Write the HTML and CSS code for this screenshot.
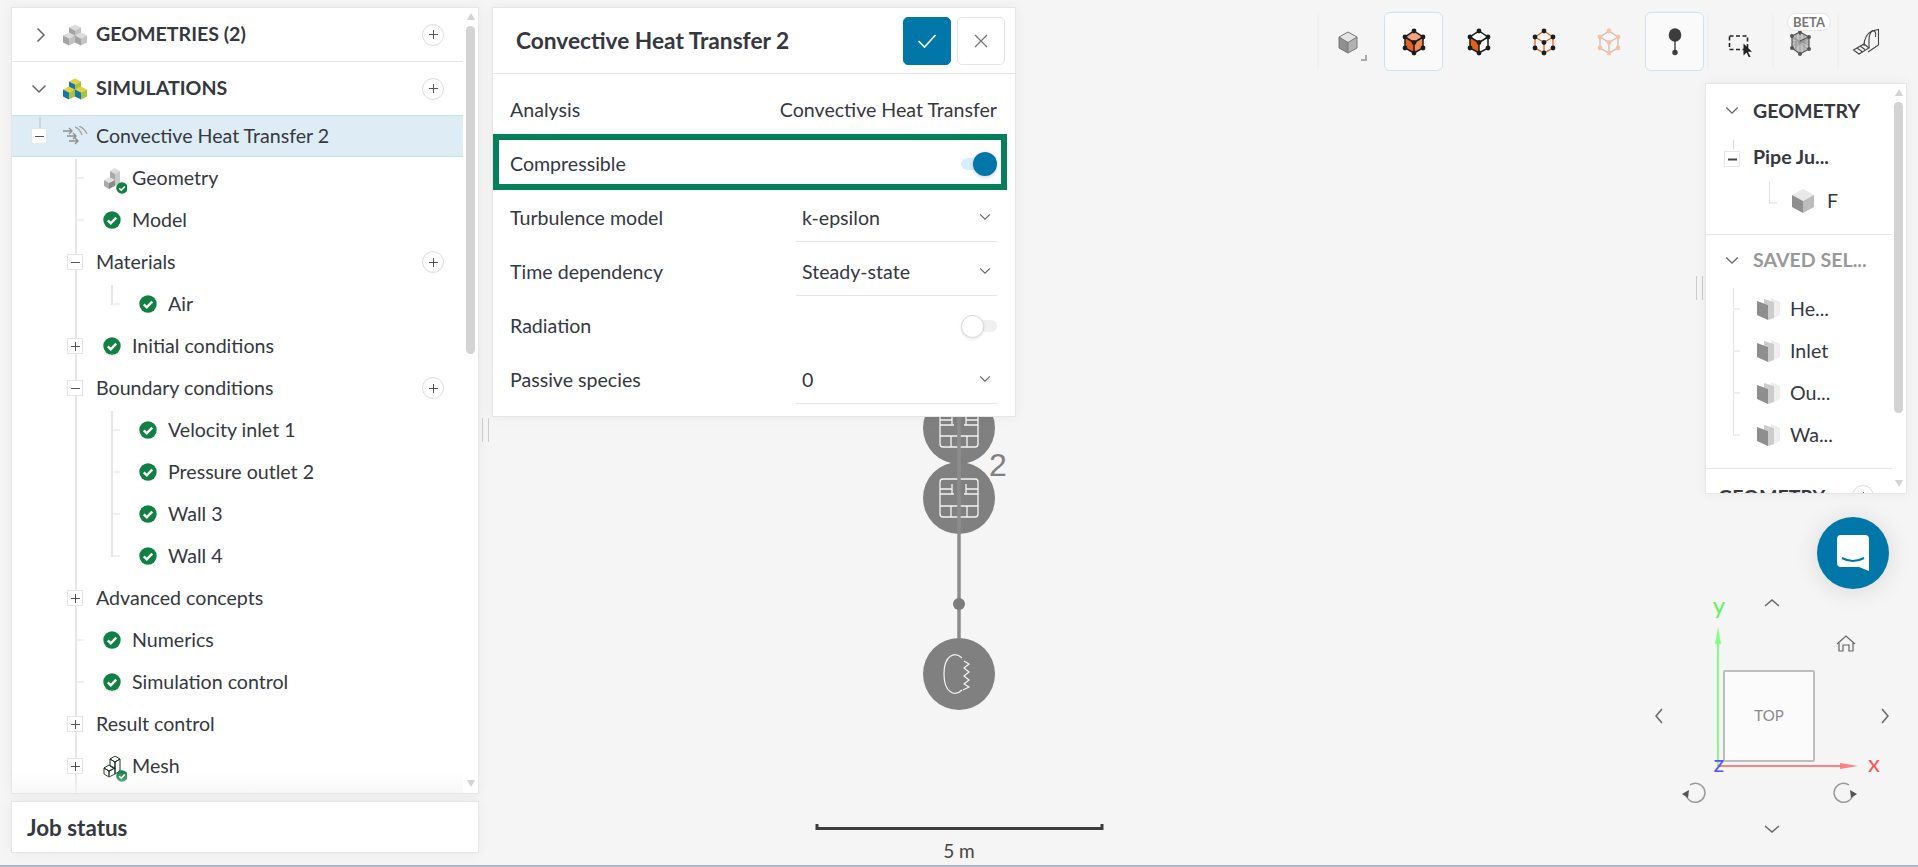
FILE: index.html
```html
<!DOCTYPE html>
<html lang="en">
<head>
<meta charset="utf-8">
<title>Convective Heat Transfer 2</title>
<link rel="stylesheet" href="styles.css">
</head>
<body>
<svg class="sprite" aria-hidden="true">
  <defs>
    <symbol id="ok" viewBox="0 0 18 18"><circle cx="9" cy="9" r="8.7" fill="#118043"/><path d="M4.8 9.3l3 3 5.4-5.6" fill="none" stroke="#fff" stroke-width="2.4"/></symbol>
    <symbol id="plus" viewBox="0 0 9 9"><path d="M4.5 0v9M0 4.5h9" stroke="#555" stroke-width="1" fill="none"/></symbol>
    <symbol id="minus" viewBox="0 0 9 9"><path d="M0 4.5h9" stroke="#555" stroke-width="1" fill="none"/></symbol>
    <symbol id="minus-b" viewBox="0 0 9 9"><path d="M0 4.5h9" stroke="#444" stroke-width="2" fill="none"/></symbol>
    <symbol id="chev-d" viewBox="0 0 16 10"><path d="M1.5 1.5L8 8l6.5-6.5" fill="none" stroke="#666" stroke-width="1.5"/></symbol>
    <symbol id="chev-r" viewBox="0 0 10 16"><path d="M1.5 1.5L8 8l-6.5 6.5" fill="none" stroke="#666" stroke-width="1.5"/></symbol>
    <g id="c3">
      <polygon class="ct" points="0,-6.5 6,-3.5 0,-.5 -6,-3.5"/>
      <polygon class="cl" points="-6,-3.5 0,-.5 0,6.5 -6,3.5"/>
      <polygon class="cr" points="6,-3.5 0,-.5 0,6.5 6,3.5"/>
    </g>
    <symbol id="face" viewBox="0 0 24 22">
      <polygon points="14,0 23,4 23,17 17,20 14,8" fill="#eeeeee"/>
      <polygon points="7,1 17,4 17,20 11,22 11,7 7,5.500" fill="#cccccc"/>
      <polygon points="0,3 11,7 11,22 0,17" fill="#8e8e8e"/>
    </symbol>
  </defs>
</svg>

<div class="app">
  <aside class="left">
    <section class="panel tree-panel">
      <div class="tree">
        <div class="head head-line">
          <svg class="hchev-r"><use href="#chev-r"/></svg>
          <svg class="cubes grey" viewBox="0 0 24 22"><use href="#c3" x="12" y="7"/><use href="#c3" x="6" y="15"/><use href="#c3" x="18" y="15"/></svg>
          <span class="head-text">GEOMETRIES (2)</span>
          <span class="add"><svg><use href="#plus"/></svg></span>
        </div>
        <div class="head head-sim">
          <svg class="hchev-d"><use href="#chev-d"/></svg>
          <svg class="cubes colour" viewBox="0 0 24 22"><use href="#c3" x="12" y="7"/><use href="#c3" x="6" y="15"/><use href="#c3" x="18" y="15"/></svg>
          <span class="head-text">SIMULATIONS</span>
          <span class="add"><svg><use href="#plus"/></svg></span>
        </div>
        <div class="sim-row">
          <span class="exp"><svg><use href="#minus"/></svg></span>
          <svg class="conv" viewBox="0 0 26 20" fill="none" stroke="#8f8f8f" stroke-width="1.4">
            <path d="M1 5h9M7 2l3 3-3 3M5 10h9M11 7l3 3-3 3M7 15h9M13 12l3 3-3 3"/>
            <path d="M13 1q5 2 7 8M17 0q5 2 8 8" stroke="#a8a8a8"/>
          </svg>
          <span class="label">Convective Heat Transfer 2</span>
        </div>
        <div class="children">
          <div class="row tick"><span class="slot"></span>
            <svg class="geo" viewBox="0 0 24 26"><polygon points="7,3 12,0 17,3 12,6" fill="#ddd"/><polygon points="7,3 12,6 12,13 7,10" fill="#aaa"/><polygon points="12,6 17,3 17,15 12,18" fill="#c9c9c9"/><polygon points="1,12 6,9 12,12 6,15" fill="#e4e4e4"/><polygon points="1,12 6,15 6,21 1,18" fill="#aaa"/><polygon points="6,15 12,12 12,18 6,21" fill="#8c8c8c"/><use href="#ok" x="13" y="14" width="12" height="12"/></svg>
            <span class="label geo-label">Geometry</span></div>
          <div class="row tick"><span class="slot"></span><svg class="ok"><use href="#ok"/></svg><span class="label">Model</span></div>
          <div class="row"><span class="exp"><svg><use href="#minus"/></svg></span><span class="label">Materials</span><span class="add"><svg><use href="#plus"/></svg></span></div>
          <div class="nested">
            <div class="row deep tick"><span class="slot"></span><svg class="ok"><use href="#ok"/></svg><span class="label">Air</span></div>
          </div>
          <div class="row"><span class="exp"><svg><use href="#plus"/></svg></span><svg class="ok"><use href="#ok"/></svg><span class="label">Initial conditions</span></div>
          <div class="row"><span class="exp"><svg><use href="#minus"/></svg></span><span class="label">Boundary conditions</span><span class="add"><svg><use href="#plus"/></svg></span></div>
          <div class="nested">
            <div class="row deep tick"><span class="slot"></span><svg class="ok"><use href="#ok"/></svg><span class="label">Velocity inlet 1</span></div>
            <div class="row deep tick"><span class="slot"></span><svg class="ok"><use href="#ok"/></svg><span class="label">Pressure outlet 2</span></div>
            <div class="row deep tick"><span class="slot"></span><svg class="ok"><use href="#ok"/></svg><span class="label">Wall 3</span></div>
            <div class="row deep tick"><span class="slot"></span><svg class="ok"><use href="#ok"/></svg><span class="label">Wall 4</span></div>
          </div>
          <div class="row"><span class="exp"><svg><use href="#plus"/></svg></span><span class="label">Advanced concepts</span></div>
          <div class="row tick"><span class="slot"></span><svg class="ok"><use href="#ok"/></svg><span class="label">Numerics</span></div>
          <div class="row tick"><span class="slot"></span><svg class="ok"><use href="#ok"/></svg><span class="label">Simulation control</span></div>
          <div class="row"><span class="exp"><svg><use href="#plus"/></svg></span><span class="label">Result control</span></div>
          <div class="row"><span class="exp"><svg><use href="#plus"/></svg></span>
            <svg class="geo" viewBox="0 0 24 26"><g fill="none" stroke="#1d3320" stroke-width="1"><polygon points="7,3 12,0 17,3 12,6"/><polygon points="7,3 12,6 12,13 7,10"/><polygon points="12,6 17,3 17,15 12,18"/><polygon points="1,12 6,9 12,12 6,15"/><polygon points="1,12 6,15 6,21 1,18"/><polygon points="6,15 12,12 12,18 6,21"/></g><use href="#ok" x="13" y="14" width="12" height="12"/></svg>
            <span class="label geo-label">Mesh</span></div>
        </div>
        <div class="fade"></div>
      </div>
      <div class="scrollbar">
        <span class="arrow-up"></span>
        <span class="thumb thumb-left"></span>
        <span class="grow"></span>
        <span class="arrow-down"></span>
      </div>
    </section>
    <section class="panel job">Job status</section>
  </aside>

  <main class="viewer">
    <svg class="scene" viewBox="0 0 1918 867" width="1918" height="867">
      <g class="diagram">
        <circle cx="959" cy="428" r="36" fill="#808080"/>
        <circle cx="959" cy="498" r="36" fill="#808080"/>
        <circle cx="959" cy="674" r="36" fill="#808080"/>
        <g fill="none" stroke="#f4f4f4" stroke-width="1.3">
          <rect x="940" y="410" width="38" height="37" rx="3"/>
          <path d="M940 420h12M952 415v10M940 425h14M966 420h12M966 415v10M964 425h14M940 436h38M951 436v11M967 436v11"/>
          <rect x="940" y="479" width="38" height="38" rx="3"/>
          <path d="M940 489h12M952 484v10M940 494h14M966 489h12M966 484v10M964 494h14M940 506h38M951 506v11M967 506v11"/>
          <path d="M962 658C955 651 944 655 944 674C944 693 955 697 962 690" stroke-width="1.2"/>
          <path d="M964 661l5 3-5 4 5 4-5 4 5 4-5 4 5 3-6 3" stroke-width="1.2"/>
        </g>
        <line x1="959" y1="417" x2="959" y2="638" stroke="#8c8c8c" stroke-width="3.500"/>
        <circle cx="959" cy="604" r="6" fill="#7d7d7d"/>
        <text x="989" y="476" class="count">2</text>
      </g>
      <g class="scale">
        <path d="M817 824v4.500h285v-4.500" fill="none" stroke="#3d3d3d" stroke-width="3"/>
        <text x="959" y="858" text-anchor="middle" class="scale-text">5 m</text>
      </g>
      <g class="gizmo">
        <rect x="1724" y="671" width="90" height="90" rx="1" fill="#fbfbfb" stroke="#bdbdbd" stroke-width="2"/>
        <text x="1769" y="721" text-anchor="middle" class="top-text">TOP</text>
        <line x1="1718" y1="640" x2="1718" y2="766" stroke="#80ff80" stroke-width="2"/>
        <polygon points="1718,627 1715,644 1721,644" fill="#80ff80"/>
        <line x1="1718" y1="766" x2="1845" y2="766" stroke="#ff8080" stroke-width="2"/>
        <polygon points="1858,766 1840,763 1840,769" fill="#ff8080"/>
        <text x="1719" y="614" text-anchor="middle" class="axis ay">y</text>
        <text x="1874" y="772" text-anchor="middle" class="axis ax">x</text>
        <text x="1719" y="772" text-anchor="middle" class="axis az">z</text>
        <g fill="none" stroke="#666" stroke-width="1.5">
          <path d="M1765 606l7-6 7 6M1765 826l7 6 7-6M1662 709l-6 7 6 7M1882 709l6 7-6 7"/>
          <path d="M1837 644l9-8 9 8M1839 642v9h4v-6h6v6h4v-9" stroke-width="1.2"/>
        </g>
        <g fill="none" stroke="#999" stroke-width="1.5">
          <path d="M1690 785a9.500 9.500 0 1 1-4 9"/>
          <path d="M1849 785a9.500 9.500 0 1 0 4 9"/>
        </g>
        <polygon points="1682,794 1689,790 1688,798" fill="#555"/>
        <polygon points="1857,794 1850,790 1851,798" fill="#555"/>
      </g>
    </svg>

    <section class="panel dialog">
      <header class="dlg-head">
        <h1 class="dlg-title">Convective Heat Transfer 2</h1>
        <button class="btn btn-ok"><svg viewBox="0 0 20 16" width="20" height="16"><path d="M1.500 8l6 6L18.500 2" fill="none" stroke="#fff" stroke-width="1.600"/></svg></button>
        <button class="btn btn-no"><svg viewBox="0 0 14 14" width="14" height="14"><path d="M1 1l12 12M13 1L1 13" fill="none" stroke="#777" stroke-width="1.300"/></svg></button>
      </header>
      <div class="dlg-body">
        <div class="field"><span>Analysis</span><span>Convective Heat Transfer</span></div>
        <div class="field field-hl"><span>Compressible</span><span class="toggle on"><i></i></span></div>
        <div class="field"><span>Turbulence model</span><span class="select">k-epsilon<svg><use href="#chev-d"/></svg></span></div>
        <div class="field"><span>Time dependency</span><span class="select">Steady-state<svg><use href="#chev-d"/></svg></span></div>
        <div class="field"><span>Radiation</span><span class="toggle"><i></i></span></div>
        <div class="field"><span>Passive species</span><span class="select">0<svg><use href="#chev-d"/></svg></span></div>
      </div>
    </section>
    <span class="grip grip-left"></span>
    <span class="grip grip-right"></span>

    <nav class="toolbar">
      <span class="tool sep tool-first"><svg viewBox="0 0 30 30"><polygon points="15,5 24,10 15,15.500 6,10" fill="#e4e4e4"/><polygon points="6,10 15,15.500 15,26 6,21" fill="#8f8f8f"/><polygon points="24,10 15,15.500 15,26 24,21" fill="#b2b2b2"/><path d="M15 5l9 5v11l-9 5-9-5V10zM6 10l9 5.500L24 10M15 15.500V26" fill="none" stroke="#777" stroke-width="1"/></svg><i class="corner"></i></span>
      <span class="tool card"><svg viewBox="0 0 30 30"><polygon points="15,4 24,10 15,15.500 6,10" fill="#f2a480"/><polygon points="6,10 15,15.500 15,26 6,21" fill="#e0601e"/><polygon points="24,10 15,15.500 15,26 24,21" fill="#ee8a58"/><g class="vx-black"><path class="edge" d="M15 4l9 6v11l-9 5-9-5V10zM6 10l9 5.500L24 10M15 15.500V26"/><circle cx="15" cy="4" r="2.400"/><circle cx="24" cy="10" r="2.400"/><circle cx="24" cy="21" r="2.400"/><circle cx="15" cy="26" r="2.400"/><circle cx="6" cy="21" r="2.400"/><circle cx="6" cy="10" r="2.400"/><circle cx="15" cy="15.500" r="2.400"/></g></svg></span>
      <span class="tool"><svg viewBox="0 0 30 30"><polygon points="15,4 24,10 15,15.500 6,10" fill="#fff"/><polygon points="6,10 15,15.500 15,26 6,21" fill="#e0601e"/><polygon points="24,10 15,15.500 15,26 24,21" fill="#fff"/><g class="vx-black"><path class="edge" d="M15 4l9 6v11l-9 5-9-5V10zM6 10l9 5.500L24 10M15 15.500V26"/><circle cx="15" cy="4" r="2.400"/><circle cx="24" cy="10" r="2.400"/><circle cx="24" cy="21" r="2.400"/><circle cx="15" cy="26" r="2.400"/><circle cx="6" cy="21" r="2.400"/><circle cx="6" cy="10" r="2.400"/><circle cx="15" cy="15.500" r="2.400"/></g></svg></span>
      <span class="tool"><svg viewBox="0 0 30 30"><g class="vx-black"><path class="edge-o" d="M15 4l9 6v11l-9 5-9-5V10zM6 10l9 5.500L24 10M15 15.500V26"/><circle cx="15" cy="4" r="2.400"/><circle cx="24" cy="10" r="2.400"/><circle cx="24" cy="21" r="2.400"/><circle cx="15" cy="26" r="2.400"/><circle cx="6" cy="21" r="2.400"/><circle cx="6" cy="10" r="2.400"/><circle cx="15" cy="15.500" r="2.400"/></g></svg></span>
      <span class="tool"><svg viewBox="0 0 30 30"><g class="vx-pale"><path class="edge-p" d="M15 4l9 6v11l-9 5-9-5V10zM6 10l9 5.500L24 10M15 15.500V26"/><circle cx="15" cy="4" r="2.400"/><circle cx="24" cy="10" r="2.400"/><circle cx="24" cy="21" r="2.400"/><circle cx="15" cy="26" r="2.400"/><circle cx="6" cy="21" r="2.400"/><circle cx="6" cy="10" r="2.400"/><circle cx="15" cy="15.500" r="2.400"/></g></svg></span>
      <span class="tool card tool-pin"><svg viewBox="0 0 30 30"><line x1="15" y1="10" x2="15" y2="26" stroke="#777" stroke-width="2"/><ellipse cx="15" cy="8" rx="6.300" ry="6.800" fill="#3c3c3c"/><circle cx="15" cy="25.500" r="2.700" fill="#3c3c3c"/></svg></span>
      <span class="tool sep"><svg viewBox="0 0 30 30"><rect x="5.500" y="9" width="18" height="13.500" fill="none" stroke="#222" stroke-width="1.600" stroke-dasharray="4 2.500"/><path d="M19.500 16.500v12l3-3 2.500 5 1.500-.8-2.500-5h4z" fill="#222"/></svg></span>
      <span class="tool sep tool-beta"><em class="beta">BETA</em><svg viewBox="0 0 30 30"><polygon points="14,5 23,10 23,22 14,27 6,21 6,9" fill="#c4c4c4"/><path d="M8 10l13 12M21 10L8 22M14 5v22M6 15h17M10 7v17M18 8v17M6 11l17 7M6 19l17-7" stroke="#8a8a8a" stroke-width=".7" fill="none"/><path d="M6 9l8-4 9 5v12l-9 5-8-6zM14 5v3M23 10l-9 4" fill="none" stroke="#555" stroke-width="1.200"/><circle cx="6" cy="9" r="2" fill="#555"/><circle cx="14" cy="5" r="2" fill="#555"/><circle cx="23" cy="10" r="2" fill="#555"/><circle cx="23" cy="22" r="2" fill="#555"/><circle cx="14" cy="27" r="2" fill="#555"/><circle cx="6" cy="21" r="2" fill="#555"/></svg></span>
      <span class="tool sep tool-tape"><svg viewBox="0 0 30 30"><g fill="none" stroke="#444" stroke-width="1.100"><path d="M12 19c0-8 4-13 8-15l6.500-1.500V18L16 25"/><path d="M20 4c4-1 4 3 3.500 6"/><path d="M17 13c0-4 1-7 3-9M17 13v8"/><path d="M1.500 23L12 17l5 4-10 6zM5 21l5 3.500M8 19l5 3.500"/></g></svg></span>
    </nav>

    <section class="panel props">
      <div class="props-main">
        <div class="p-head p-first"><svg class="pchev"><use href="#chev-d"/></svg><b>GEOMETRY</b></div>
        <div class="p-row p-pipe"><span class="exp p-exp"><svg><use href="#minus-b"/></svg></span><b>Pipe Ju...</b></div>
        <div class="p-row p-f"><svg class="p-cube" viewBox="0 0 22 24"><polygon points="11,0 22,6 11,12 0,6" fill="#e9e9e9"/><polygon points="0,6 11,12 11,24 0,18" fill="#8f8f8f"/><polygon points="22,6 11,12 11,24 22,18" fill="#bcbcbc"/></svg><span class="p-text">F</span></div>
        <div class="p-rule"></div>
        <div class="p-head p-saved"><svg class="pchev"><use href="#chev-d"/></svg><b class="p-text">SAVED SEL...</b></div>
        <div class="p-list">
          <div class="p-row p-item"><svg class="p-face"><use href="#face"/></svg><span class="p-text">He...</span></div>
          <div class="p-row p-item"><svg class="p-face"><use href="#face"/></svg><span class="p-text">Inlet</span></div>
          <div class="p-row p-item"><svg class="p-face"><use href="#face"/></svg><span class="p-text">Ou...</span></div>
          <div class="p-row p-item"><svg class="p-face"><use href="#face"/></svg><span class="p-text">Wa...</span></div>
        </div>
        <div class="p-rule p-rule2"></div>
        <div class="p-head p-geo"><b>GEOMETRY</b><span class="add"><svg><use href="#plus"/></svg></span></div>
      </div>
      <div class="scrollbar scrollbar-right">
        <span class="arrow-up"></span>
        <span class="thumb thumb-right"></span>
        <span class="grow"></span>
        <span class="arrow-down"></span>
      </div>
    </section>

    <span class="chat"><svg viewBox="0 0 72 72" width="72" height="72"><path d="M24 18h24a4 4 0 0 1 4 4v32l-10-4H24a4 4 0 0 1-4-4V22a4 4 0 0 1 4-4z" fill="#fff"/><path d="M25 41q11 6 22 0" fill="none" stroke="#0077a8" stroke-width="2"/></svg></span>
  </main>
</div>
<div class="strip"></div>
</body>
</html>
```

FILE: styles.css
```css
* { box-sizing: border-box; }
html, body { margin: 0; padding: 0; height: 867px; overflow: hidden; }
body { font-family: "Lato", "Liberation Sans", sans-serif; font-size: 19.6px; color: #35383f; background: #f5f5f5; }
.sprite { position: absolute; width: 0; height: 0; }
.ct { fill: var(--t); }
.cl { fill: var(--l); }
.cr { fill: var(--r); }

.app { display: flex; height: 865px; }
.strip { height: 2px; background: #b0b4c4; }

.panel { background: #fff; border: 1px solid #e6e6e6; box-shadow: 0 0 12px rgba(0, 0, 0, .05); }

/* left column */
.left { width: 479px; flex: none; display: flex; flex-direction: column; gap: 7px; padding: 7px 0 0 11px; }
.tree-panel { height: 787px; display: flex; overflow: hidden; }
.tree { position: relative; width: 451px; flex: none; display: flex; flex-direction: column; }
.fade { position: absolute; left: 0; right: 0; bottom: 0; height: 22px; background: linear-gradient(rgba(245, 245, 245, 0), rgba(245, 245, 245, .7)); }
.head { height: 54px; flex: none; display: flex; align-items: center; padding-left: 18px; }
.head-sim { height: 53px; }
.head-line { border-bottom: 1px solid #e6e6e6; }
.hchev-r { width: 10px; height: 16px; margin: 0 17px 0 6px; }
.hchev-d { width: 16px; height: 10px; margin: 0 16px 0 1px; }
.cubes { width: 24px; height: 22px; margin-right: 9px; }
.grey { --t: #dcdcdc; --l: #a4a4a4; --r: #c2c2c2; }
.colour { --t: #e4d23c; --l: #1478ad; --r: #a9c23f; }
.head-text { font-weight: 700; padding-bottom: 2px; }
.add { width: 22px; height: 22px; border: 1px solid #ddd; border-radius: 50%; background: #fff; margin: 0 19px 0 auto; display: flex; align-items: center; justify-content: center; flex: none; }
.add svg { width: 9px; height: 9px; }
.sim-row { position: relative; height: 42px; flex: none; background: #deedf5; border-top: 1px solid #c7e0ee; border-bottom: 1px solid #c7e0ee; display: flex; align-items: center; padding-left: 19px; }
.sim-row::before { content: ""; position: absolute; left: 27px; top: 1px; width: 2px; height: 11px; background: #c6d8e3; }
.conv { width: 26px; height: 20px; margin: 0 8px 0 15px; }
.exp { position: relative; z-index: 1; width: 16px; height: 16px; background: #fff; border: 1px solid #e6e6e6; display: flex; align-items: center; justify-content: center; flex: none; }
.exp svg { width: 9px; height: 9px; }
.children { position: relative; flex: 1; }
.children::before { content: ""; position: absolute; left: 63px; top: 2px; bottom: 0; width: 2px; background: #e6e6e6; }
.row { position: relative; height: 42px; display: flex; align-items: center; padding-left: 55px; }
.row.deep { padding-left: 91px; }
.slot { width: 16px; flex: none; }
.label { padding-bottom: 2px; }
.row .exp + .label { margin-left: 13px; }
.ok { width: 18px; height: 18px; margin: 0 11px 0 20px; flex: none; }
.geo { width: 24px; height: 26px; margin: 0 5px 0 20px; flex: none; position: relative; top: 3px; }
.geo-label { padding-bottom: 0; position: relative; top: -1px; }
.nested { position: relative; }
.nested::before { content: ""; position: absolute; left: 99px; top: 2px; bottom: 20px; width: 2px; background: #e6e6e6; }
.tick::before { content: ""; position: absolute; left: 65px; top: 20px; width: 7px; height: 2px; background: #f0f0f0; }
.deep.tick::before { left: 101px; }

.scrollbar { width: 9px; flex: none; margin-left: 3px; display: flex; flex-direction: column; align-items: center; padding: 5px 0 6px; }
.arrow-up { width: 0; height: 0; border-left: 4.500px solid transparent; border-right: 4.500px solid transparent; border-bottom: 7px solid #d3d3d3; flex: none; }
.arrow-down { width: 0; height: 0; border-left: 4.500px solid transparent; border-right: 4.500px solid transparent; border-top: 7px solid #d3d3d3; flex: none; }
.thumb { width: 9px; background: #d3d3d3; border-radius: 5px; margin-top: 6px; flex: none; }
.thumb-left { height: 328px; }
.thumb-right { height: 311px; }
.grow { flex: 1; }

.job { height: 52px; display: flex; align-items: center; padding-left: 15px; font-size: 22.4px; font-weight: 700; }

/* viewer */
.viewer { position: relative; flex: 1; }
.scene { position: absolute; left: -479px; top: 0; }
.count { font: 32px "Liberation Sans", sans-serif; fill: #808080; }
.scale-text { font: 19px "Lato", sans-serif; fill: #444; }
.top-text { font: 15px "Lato", sans-serif; fill: #8a8a8a; }
.axis { font: 24px "Lato", sans-serif; }
.ay { fill: #5fef5f; }
.ax { fill: #ff5555; }
.az { fill: #5555ff; }

.dialog { position: absolute; left: 13px; top: 7px; width: 524px; height: 410px; }
.dlg-head { height: 66px; display: flex; align-items: center; padding: 0 10px 0 23px; border-bottom: 1px solid #e6e6e6; }
.dlg-title { margin: 0 auto 0 0; font-size: 22.7px; font-weight: 700; }
.btn { width: 48px; height: 48px; border-radius: 5px; border: 1px solid #e6e6e6; background: #fff; padding: 0; display: flex; align-items: center; justify-content: center; }
.btn-ok { background: #0077a8; border-color: #0077a8; margin-right: 6px; }
.dlg-body { padding-top: 9px; }
.field { position: relative; height: 54px; display: flex; align-items: center; justify-content: space-between; padding: 0 18px 0 17px; }
.field > span:not(.toggle) { padding-bottom: 2px; }
.field-hl::after { content: ""; position: absolute; left: 0; right: 8px; top: -3px; bottom: 1px; border: 6px solid #06805a; pointer-events: none; }
.field > .select { width: 201px; height: 47px; margin-top: 4px; align-self: flex-start; border-bottom: 1px solid #e6e6e6; display: flex; align-items: center; justify-content: space-between; padding: 0 6px 2px 6px; }
.select svg { width: 12px; height: 8px; }
.toggle { position: relative; width: 36px; height: 12px; background: #f0f0f0; border-radius: 6px; }
.toggle i { position: absolute; left: 0; top: -5.500px; width: 23px; height: 23px; border-radius: 50%; background: #fff; border: 1px solid #d8d8d8; box-shadow: 0 1px 3px rgba(0, 0, 0, .1); }
.toggle.on { background: #d8eefa; }
.toggle.on i { left: 12px; top: -6px; width: 24px; height: 24px; background: #0077a8; border: 0; box-shadow: 0 1px 4px rgba(0, 0, 0, .2); }

.grip { position: absolute; width: 7px; height: 24px; border-left: 1px solid #ccc; border-right: 1px solid #ccc; }
.grip-left { left: 3px; top: 418px; }
.grip-right { left: 1217px; top: 276px; }

.toolbar { position: absolute; left: 840px; top: 12px; display: flex; gap: 6px; }
.tool { position: relative; width: 59px; height: 59px; display: flex; align-items: center; justify-content: center; flex: none; }
.tool svg { width: 30px; height: 30px; }
.tool-first svg { margin-left: -2px; }
.tool-pin { left: 1px; }
.card { border: 1px solid #c9e4f0; background: #fafafa; border-radius: 6px; }
.sep { box-shadow: -3px 0 3px -2px rgba(0, 0, 0, .04); }
.corner { position: absolute; left: 42px; top: 43px; width: 6px; height: 6px; border-right: 2px solid #aaa; border-bottom: 2px solid #aaa; }
.vx-black circle { fill: #1c1c1c; }
.vx-pale circle { fill: #f5c2a8; }
.edge { fill: none; stroke: #1c1c1c; stroke-width: 1.500; }
.edge-o { fill: none; stroke: #e0601e; stroke-width: 1.300; }
.edge-p { fill: none; stroke: #c8bcb6; stroke-width: 1.300; }
.tool-beta svg { margin-left: -6px; }
.tool-tape svg { margin-left: -4px; }
.beta { position: absolute; left: 13px; top: 1px; width: 44px; height: 18px; background: #fff; border: 1px solid #e6e6e6; border-radius: 9px; font: 700 13px/16px "Lato", sans-serif; color: #777; text-align: center; z-index: 1; }

.props { position: absolute; left: 1226px; top: 83px; width: 202px; height: 411px; display: flex; overflow: hidden; }
.props-main { width: 186px; flex: none; }
.p-head { height: 52px; display: flex; align-items: center; padding-left: 19px; }
.p-first { height: 54px; padding-bottom: 2px; }
.pchev { width: 14px; height: 9px; margin-right: 14px; flex: none; }
.p-row { position: relative; height: 42px; display: flex; align-items: center; }
.p-text { padding-bottom: 2px; }
.p-pipe { padding-left: 18px; }
.p-pipe b { padding-bottom: 5px; }
.p-pipe::before { content: ""; position: absolute; left: 27px; top: 2px; width: 1px; height: 10px; background: #e0e0e0; }
.p-exp { margin-right: 13px; }
.p-f { padding-left: 86px; }
.p-f::before { content: ""; position: absolute; left: 63px; top: 2px; width: 7px; height: 20px; border-left: 1px solid #e0e0e0; border-bottom: 2px solid #eee; }
.p-cube { width: 22px; height: 24px; margin-right: 13px; }
.p-rule { height: 1px; background: #e6e6e6; margin-top: 12px; }
.p-saved { height: 50px; margin-bottom: 3px; color: #999; }
.p-list { position: relative; }
.p-list::before { content: ""; position: absolute; left: 27px; top: 0; bottom: 20px; width: 1px; background: #e6e6e6; }
.p-item { padding-left: 51px; }
.p-item::before { content: ""; position: absolute; left: 27px; top: 20px; width: 7px; height: 2px; background: #eee; }
.p-face { width: 24px; height: 22px; margin-right: 9px; flex: none; }
.p-rule2 { margin-top: 12px; }
.p-geo { padding-left: 12px; height: 54px; }
.p-geo .add { margin-right: 18px; }
.scrollbar-right { margin-left: 2px; padding-top: 5px; }

.chat { position: absolute; left: 1338px; top: 517px; width: 72px; height: 72px; border-radius: 50%; background: #0077a8; box-shadow: 0 2px 24px rgba(0, 0, 0, .12); }
```
